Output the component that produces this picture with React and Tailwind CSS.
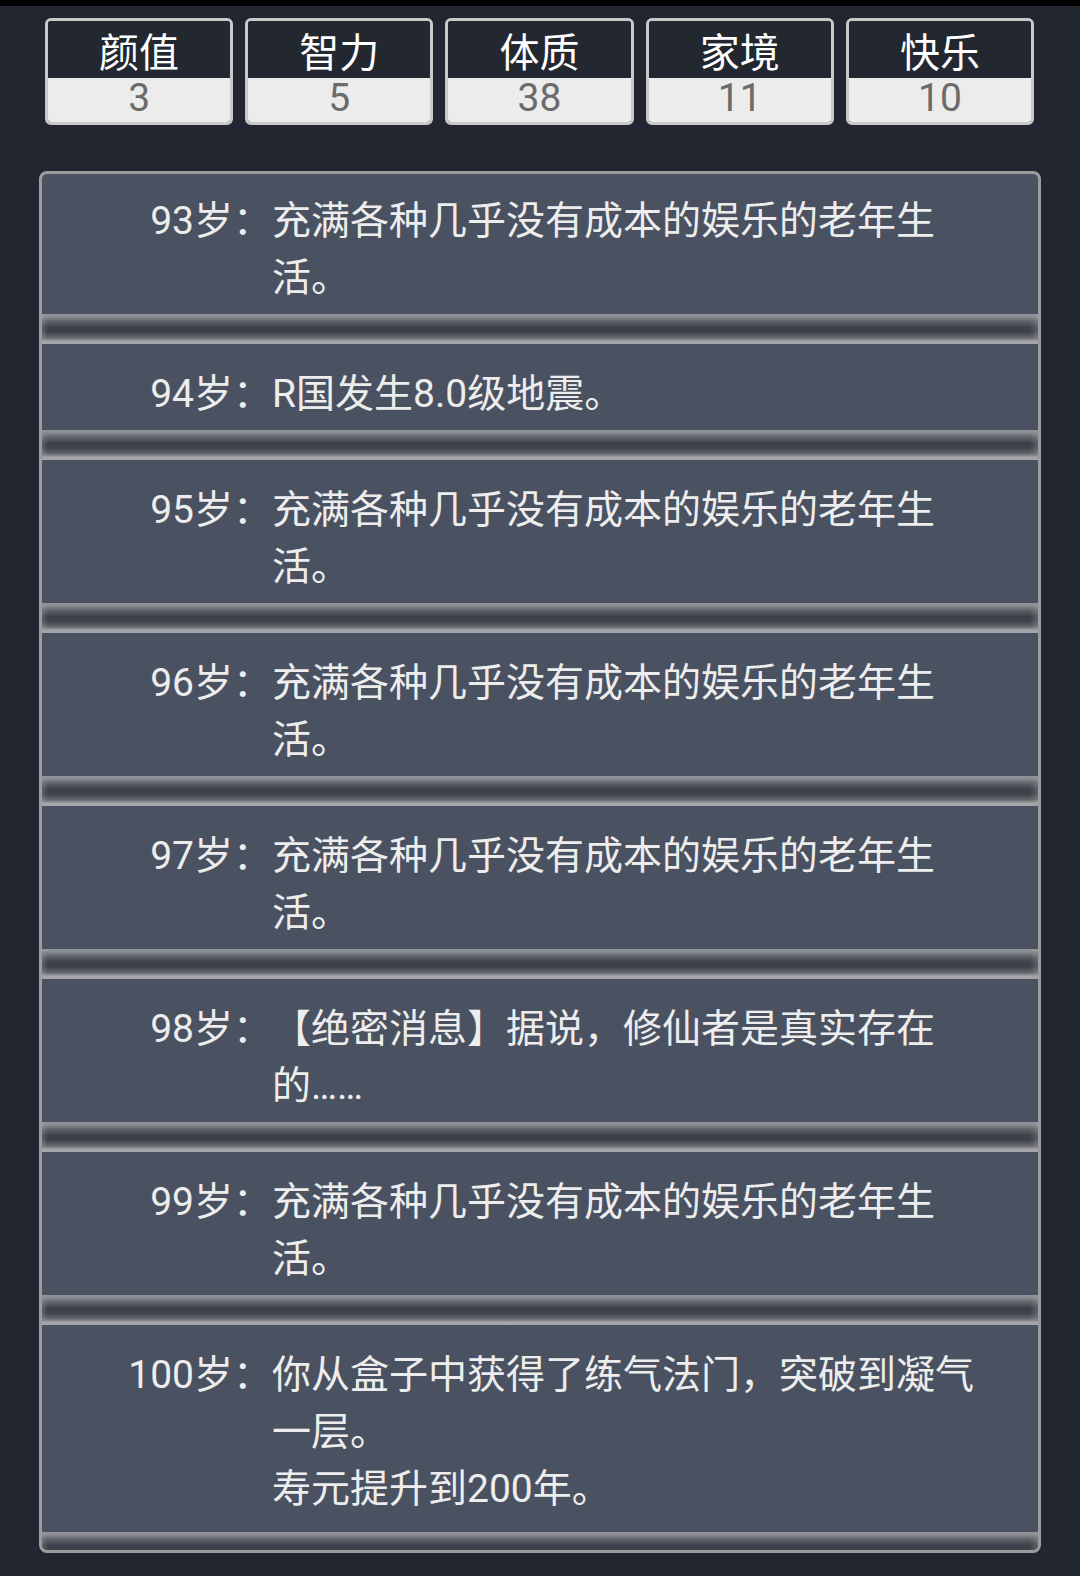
import React from "react";

const stats = [
  ["颜值", "3"],
  ["智力", "5"],
  ["体质", "38"],
  ["家境", "11"],
  ["快乐", "10"],
];

const LIFE = "充满各种几乎没有成本的娱乐的老年生活。";

const entries = [
  { age: "93岁：", lines: [LIFE] },
  { age: "94岁：", lines: ["R国发生8.0级地震。"] },
  { age: "95岁：", lines: [LIFE] },
  { age: "96岁：", lines: [LIFE] },
  { age: "97岁：", lines: [LIFE] },
  { age: "98岁：", lines: ["【绝密消息】据说，修仙者是真实存在的……"] },
  { age: "99岁：", lines: [LIFE] },
  {
    age: "100岁：",
    lines: ["你从盒子中获得了练气法门，突破到凝气一层。", "寿元提升到200年。"],
    last: true,
  },
];

function Bar() {
  return (
    <div className="relative h-[30px] shrink-0 bg-[linear-gradient(to_bottom,#909399_0%,#8a8d93_8%,#5e6168_25%,#3d4048_45%,#3f424a_60%,#62656c_78%,#8c8e93_87%,#a4a6a9_90%,#a4a6a9_100%)]">
      <div className="absolute inset-0 bg-[linear-gradient(to_right,rgba(160,160,165,0.35)_0px,rgba(160,160,165,0)_6px,rgba(160,160,165,0)_calc(100%-8px),rgba(160,160,165,0.35)_100%)]" />
    </div>
  );
}

export default function App() {
  return (
    <div
      className="h-[1576px] w-[1080px] overflow-hidden bg-[#212630]"
      style={{ fontFamily: 'Roboto, "Noto Sans CJK SC", sans-serif' }}
    >
      <div className="h-[6px] bg-black" />
      <div className="mt-[12px] ml-[45px] flex w-[989px] gap-[12px]">
        {stats.map(([label, value]) => (
          <div
            key={label}
            className="flex h-[107px] flex-1 flex-col overflow-hidden rounded-[6px] border-[3px] border-[#c9c9c9]"
          >
            <div className="flex h-[57px] items-start justify-center bg-[#222730] pt-[4px] text-[40px] leading-[57px] text-white">
              {label}
            </div>
            <div className="flex flex-1 items-start justify-center bg-[#ececec] pt-[2px] text-[39px] leading-[36px] text-[#6b6b6b]">
              {value}
            </div>
          </div>
        ))}
      </div>
      <div className="mt-[46px] ml-[39px] h-[1382px] w-[1002px] overflow-hidden rounded-[8px] border-[3px] border-[#9c9c9c] bg-[#4a5261]">
        <div className="-mt-[3px] flex flex-col text-[39px] leading-[57px] text-[#ededed]">
          {entries.map((e) => (
            <React.Fragment key={e.age}>
              <div className={`flex pt-[22px] ${e.last ? "pb-[14px]" : "pb-[7px]"}`}>
                <div className="w-[230px] shrink-0 text-right whitespace-nowrap">{e.age}</div>
                <div className="w-[720px]">
                  {e.lines.map((l) => (
                    <div key={l}>{l}</div>
                  ))}
                </div>
              </div>
              <Bar />
            </React.Fragment>
          ))}
        </div>
      </div>
    </div>
  );
}
